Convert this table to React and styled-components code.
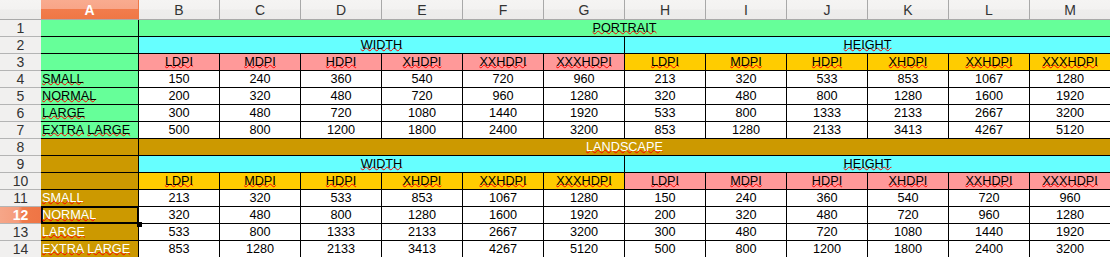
import React from "react";
import styled, { createGlobalStyle, css } from "styled-components";

const Global = createGlobalStyle`
  html, body { margin: 0; padding: 0; background: #fff; overflow: hidden; }
  body { font-family: "Liberation Sans", Arial, sans-serif; }
`;

const C = {
  green: "#66ff99",
  cyan: "#66ffff",
  pink: "#ff9999",
  yellow: "#ffcc00",
  gold: "#cc9900",
  white: "#ffffff",
};

const Sheet = styled.div`
  display: grid;
  grid-template-columns: 41px 98px repeat(12, 81px);
  grid-template-rows: 20px;
  grid-auto-rows: 17px;
  width: 1111px;
`;

const headerBg = css`
  background: linear-gradient(to bottom, #f5f4f3 0%, #f3f2f1 48%, #eeedec 52%, #ecebea 100%);
`;

const Corner = styled.div`
  ${headerBg};
  border-bottom: 1px solid #a9a9a9;
`;

const ColHead = styled.div`
  box-sizing: border-box;
  display: flex;
  align-items: center;
  justify-content: center;
  padding-top: 1px;
  font-size: 14px;
  color: #333;
  border-bottom: 1px solid #a9a9a9;
  border-right: 1px solid #a9a9a9;
  ${headerBg};
  ${(p) =>
    p.$selected &&
    css`
      background: linear-gradient(to bottom, #f9ab8f 0%, #f8a588 46%, #f27c4c 50%, #ef7746 100%);
      color: #fff;
      font-weight: bold;
      border-right-color: #ef7746;
    `}
`;

const RowHead = styled.div`
  box-sizing: border-box;
  display: flex;
  align-items: flex-end;
  justify-content: center;
  line-height: 15px;
  font-size: 14px;
  color: #333;
  border-bottom: 1px solid #b4b4b4;
  background: #f1f0ef;
  ${(p) =>
    p.$selected &&
    css`
      background: linear-gradient(to right, #f6a688 0%, #f59c7c 45%, #f07a49 55%, #ef7545 100%);
      color: #fff;
      font-weight: bold;
    `}
`;

const Cell = styled.div`
  box-sizing: border-box;
  position: relative;
  display: flex;
  align-items: flex-end;
  justify-content: ${(p) => (p.$align === "left" ? "flex-start" : "center")};
  padding-left: ${(p) => (p.$align === "left" ? "1px" : "0")};
  padding-bottom: 1px;
  grid-column: ${(p) => (p.$span ? `span ${p.$span}` : "auto")};
  background: ${(p) => p.$bg || "#fff"};
  color: ${(p) => p.$fg || "#000"};
  font-size: 12.7px;
  line-height: 14px;
  white-space: nowrap;
  border-right: 1px solid #000;
  border-bottom: 1px solid #000;
  ${(p) =>
    p.$active &&
    css`
      z-index: 2;
      &::before {
        content: "";
        position: absolute;
        top: -1px;
        left: 0;
        right: -1px;
        bottom: -1px;
        border: 2px solid #000;
      }
      &::after {
        content: "";
        position: absolute;
        right: -4px;
        bottom: -4px;
        width: 5px;
        height: 5px;
        background: #000;
      }
    `}
`;

const Spell = styled.span`
  position: relative;
  z-index: 3;
  text-decoration: underline wavy #ff0000;
  text-decoration-thickness: 1px;
  text-underline-offset: -2px;
  text-decoration-skip-ink: none;
`;

const Words = ({ text }) => {
  const parts = text.split(" ");
  return (
    <span>
      {parts.map((w, i) => (
        <React.Fragment key={i}>
          {i > 0 && " "}
          <Spell>{w}</Spell>
        </React.Fragment>
      ))}
    </span>
  );
};

const cols = ["A", "B", "C", "D", "E", "F", "G", "H", "I", "J", "K", "L", "M"];
const dpis = ["LDPI", "MDPI", "HDPI", "XHDPI", "XXHDPI", "XXXHDPI"];
const sizes = ["SMALL", "NORMAL", "LARGE", "EXTRA LARGE"];

const portraitW = [
  [150, 240, 360, 540, 720, 960],
  [200, 320, 480, 720, 960, 1280],
  [300, 480, 720, 1080, 1440, 1920],
  [500, 800, 1200, 1800, 2400, 3200],
];
const portraitH = [
  [213, 320, 533, 853, 1067, 1280],
  [320, 480, 800, 1280, 1600, 1920],
  [533, 800, 1333, 2133, 2667, 3200],
  [853, 1280, 2133, 3413, 4267, 5120],
];

const sections = [
  { title: "PORTRAIT", bg: C.green, fg: "#000", wBg: C.pink, hBg: C.yellow, w: portraitW, h: portraitH },
  { title: "LANDSCAPE", bg: C.gold, fg: "#fff", wBg: C.yellow, hBg: C.pink, w: portraitH, h: portraitW },
];

export default function App() {
  let row = 0;
  const out = [];
  sections.forEach((s) => {
    row++;
    out.push(<RowHead key={`rh${row}`}>{row}</RowHead>);
    out.push(<Cell key={`a${row}`} $bg={s.bg} />);
    out.push(
      <Cell key={`t${row}`} $span={12} $bg={s.bg} $fg={s.fg}>
        <Words text={s.title} />
      </Cell>
    );
    row++;
    out.push(<RowHead key={`rh${row}`}>{row}</RowHead>);
    out.push(<Cell key={`a${row}`} $bg={s.bg} />);
    out.push(
      <Cell key={`w${row}`} $span={6} $bg={C.cyan}>
        <Words text="WIDTH" />
      </Cell>
    );
    out.push(
      <Cell key={`h${row}`} $span={6} $bg={C.cyan}>
        <Words text="HEIGHT" />
      </Cell>
    );
    row++;
    out.push(<RowHead key={`rh${row}`}>{row}</RowHead>);
    out.push(<Cell key={`a${row}`} $bg={s.bg} />);
    dpis.forEach((d) =>
      out.push(
        <Cell key={`dw${row}${d}`} $bg={s.wBg}>
          <Words text={d} />
        </Cell>
      )
    );
    dpis.forEach((d) =>
      out.push(
        <Cell key={`dh${row}${d}`} $bg={s.hBg}>
          <Words text={d} />
        </Cell>
      )
    );
    sizes.forEach((sz, zi) => {
      row++;
      const active = row === 12;
      out.push(
        <RowHead key={`rh${row}`} $selected={active}>
          {row}
        </RowHead>
      );
      out.push(
        <Cell key={`a${row}`} $bg={s.bg} $fg={s.fg} $align="left" $active={active}>
          <Words text={sz} />
        </Cell>
      );
      s.w[zi].forEach((v, i) => out.push(<Cell key={`vw${row}${i}`}>{v}</Cell>));
      s.h[zi].forEach((v, i) => out.push(<Cell key={`vh${row}${i}`}>{v}</Cell>));
    });
  });

  return (
    <>
      <Global />
      <Sheet>
        <Corner />
        {cols.map((c) => (
          <ColHead key={c} $selected={c === "A"}>
            {c}
          </ColHead>
        ))}
        {out}
      </Sheet>
    </>
  );
}
